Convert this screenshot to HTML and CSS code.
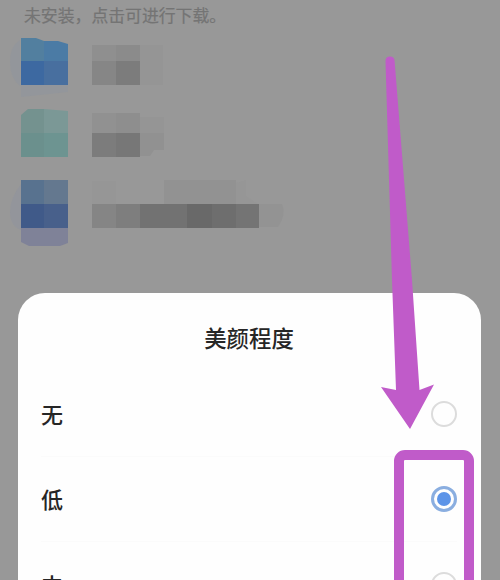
FILE: index.html
```html
<!DOCTYPE html>
<html lang="zh-CN">
<head>
<meta charset="utf-8">
<title>美颜程度</title>
<link rel="stylesheet" href="styles.css">
</head>
<body>
<main class="screen">
  <p class="hint">未安装，点击可进行下载。</p>
  <svg class="apps" width="500" height="240" viewBox="0 30 500 240" aria-hidden="true">
    <path fill="#93969b" d="M20 40Q10 46 10 62T20 86ZM21 85H68V92L21 97Z"/>
    <path fill="#527f9f" d="M21 38L36 38L44 41V62H21Z"/>
    <path fill="#4b7ba5" d="M44 41L58 41L68 44V62H44Z"/>
    <path fill="#3d69a1" d="M21 61H44V85H21Z"/>
    <path fill="#486f9f" d="M44 61H68V85H44Z"/>
    <path fill="#8f8f8f" d="M92 45H116V61H92Z"/>
    <path fill="#8b8b8b" d="M116 45H140V61H116Z"/>
    <path fill="#868686" d="M92 61H116V85H92Z"/>
    <path fill="#7c7c7c" d="M116 61H140V85H116Z"/>
    <path fill="#959595" d="M140 45H163V85H140Z"/>

    <path fill="#74928f" d="M21 115L28 109H44V133H21Z"/>
    <path fill="#7b9896" d="M44 109L68 111V133H44Z"/>
    <path fill="#6b908d" d="M21 133H44V157H21Z"/>
    <path fill="#6d9491" d="M44 133H68V157H44Z"/>
    <path fill="#919191" d="M92 113H116V133H92Z"/>
    <path fill="#8e8e8e" d="M116 113H140V133H116Z"/>
    <path fill="#7c7c7c" d="M92 133H116V157H92Z"/>
    <path fill="#777" d="M116 133H140V157H116Z"/>
    <path fill="#959595" d="M140 117H164V133H140Z"/>
    <path fill="#919191" d="M140 133H164V150H154L150 156H140Z"/>

    <path fill="#93959b" d="M21 184Q10 198 10 212T21 230Z"/>
    <path fill="#58728f" d="M21 180H44V204H21Z"/>
    <path fill="#64788f" d="M44 180H68V204H44Z"/>
    <path fill="#405a89" d="M21 204H44V228H21Z"/>
    <path fill="#48608b" d="M44 204H68V228H44Z"/>
    <path fill="#7f8298" d="M21 228H68V243L60 246H29L21 242Z"/>
    <path fill="#969696" d="M92 181H116V204H92ZM236 183L246 180V196L258 204H236Z"/>
    <path fill="#929292" d="M164 180H236V204H164Z"/>
    <path fill="#858585" d="M92 204H116V228H92Z"/>
    <path fill="#7e7e7e" d="M116 204H140V228H116Z"/>
    <path fill="#727272" d="M140 204H187V228H140Z"/>
    <path fill="#696969" d="M187 204H212V228H187Z"/>
    <path fill="#6e6e6e" d="M212 204H236V228H212Z"/>
    <path fill="#747474" d="M236 204H259V228H236Z"/>
    <path fill="#939393" d="M259 204H282Q287 214 278 227H259Z"/>
  </svg>
  <section class="sheet">
    <h1 class="title">美颜程度</h1>
    <div class="option"><span>无</span><i class="radio"></i></div>
    <div class="option"><span>低</span><i class="radio selected"></i></div>
    <div class="option last"><span>中</span><i class="radio"></i></div>
  </section>
  <div class="highlight"></div>
  <svg class="arrow" width="500" height="580" viewBox="0 0 500 580" aria-hidden="true">
    <path fill="#c05bc9" d="M385.5 61Q385.5 56.5 390 56.5T394.6 61L412 280L419.5 390L434 384.5L410 429L381 387L396 390L392 280Z"/>
  </svg>
</main>
</body>
</html>
```
FILE: styles.css
```css
* { box-sizing: border-box; }
body {
  margin: 0;
  font-family: "Noto Sans CJK SC", sans-serif;
}
.screen {
  position: relative;
  width: 500px;
  height: 580px;
  overflow: hidden;
  background: #989898;
}
.hint {
  margin: 0;
  height: 30px;
  padding: 2px 0 0 24px;
  font-size: 16.85px;
  line-height: 26px;
  color: #747474;
  -webkit-text-stroke: 0.2px #747474;
  white-space: nowrap;
}
.apps { display: block; }
.sheet {
  height: 340px;
  margin: 23px 19px 0 18px;
  padding: 0 24px 0 23px;
  border-radius: 27px 27px 0 0;
  background: #fefefe;
  color: #262626;
}
.title {
  margin: 0;
  height: 79px;
  padding-top: 27px;
  font-size: 22.4px;
  line-height: 34px;
  font-weight: 500;
  text-align: center;
}
.option {
  display: flex;
  align-items: center;
  justify-content: space-between;
  height: 85px;
  font-size: 22px;
  font-weight: 500;
  border-bottom: 1px solid #fbfbfb;
}
.option span { padding-bottom: 2px; }
.last { height: 87px; }
.last span { padding: 0 0 2px; }
.radio {
  display: grid;
  place-items: center;
  width: 26px;
  height: 26px;
  border: 2.5px solid #dcdcdc;
  border-radius: 50%;
}
.selected { border: 3px solid #8aaee0; }
.selected::after {
  content: "";
  width: 14px;
  height: 14px;
  border-radius: 50%;
  background: #5c94e8;
}
.highlight {
  position: absolute;
  left: 394px;
  top: 450px;
  width: 80px;
  height: 150px;
  border: 10px solid #c05bc9;
  border-radius: 11px;
}
.arrow {
  position: absolute;
  left: 0;
  top: 0;
}
```
